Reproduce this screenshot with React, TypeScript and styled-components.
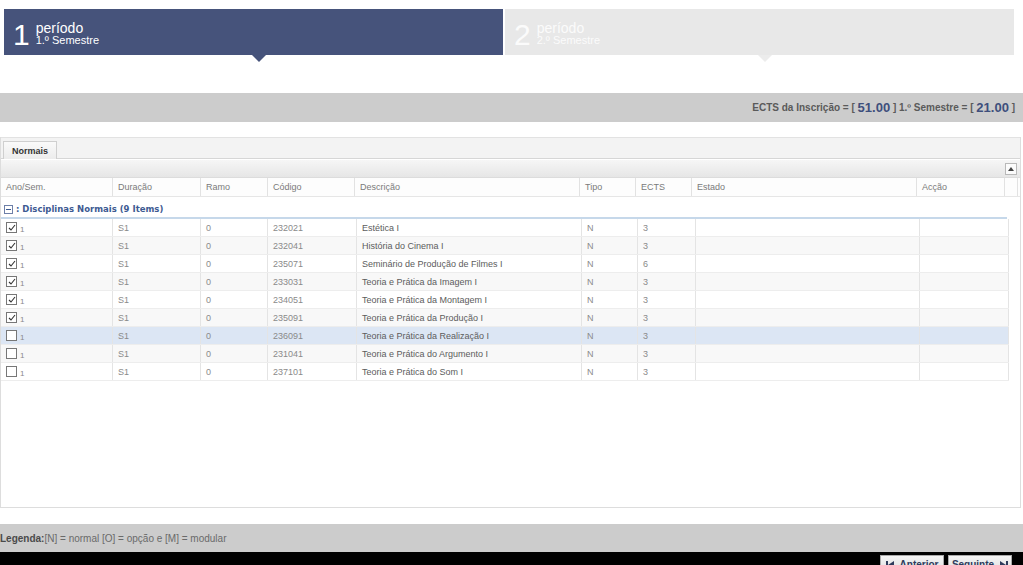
import React from 'react'
import styled, { createGlobalStyle } from 'styled-components'

const GlobalStyle = createGlobalStyle`
  html, body {
    margin: 0;
    padding: 0;
    background: #ffffff;
    font-family: "Liberation Sans", Arial, sans-serif;
  }
`

const Page = styled.div`
  width: 1023px;
  height: 565px;
  overflow: hidden;
  display: flex;
  flex-direction: column;
  & > * {
    flex-shrink: 0;
  }
`

const Steps = styled.div`
  display: flex;
  gap: 2px;
  padding: 9px 9px 0 4px;
  height: 46px;
`

const Step = styled.div<{ $active?: boolean }>`
  position: relative;
  box-sizing: border-box;
  flex: ${(p) => (p.$active ? '0 0 499px' : '1 1 auto')};
  background: ${(p) => (p.$active ? '#46537b' : '#e8e8e8')};
  color: ${(p) => (p.$active ? '#ffffff' : '#fbfbfb')};
  display: flex;
  align-items: center;
  padding-left: 9px;
  gap: 6px;

  &::after {
    content: '';
    position: absolute;
    left: calc(50% + 5px);
    bottom: -7px;
    margin-left: -7px;
    border-left: 7px solid transparent;
    border-right: 7px solid transparent;
    border-top: 7px solid ${(p) => (p.$active ? '#46537b' : '#ececec')};
  }
`

const StepNumber = styled.span`
  font-size: 30px;
  line-height: 1;
  margin-top: 6px;
`

const StepText = styled.div`
  display: flex;
  flex-direction: column;
  margin-top: 3px;
`

const StepTitle = styled.span`
  font-size: 14px;
  line-height: 14px;
`

const StepSub = styled.span`
  font-size: 11px;
  line-height: 11px;
`

const Summary = styled.div`
  margin-top: 38px;
  height: 29px;
  background: #cccccc;
  display: flex;
  align-items: center;
  justify-content: flex-end;
  padding-right: 8px;
  font-size: 10px;
  font-weight: bold;
  color: #5a5a5a;
  white-space: pre;
`

const Value = styled.span`
  font-size: 13px;
  font-weight: bold;
  color: #3e4f7c;
`

const Panel = styled.div`
  margin: 15px 2px 0 0;
  height: 371px;
  border: 1px solid #dddddd;
  border-top: none;
  display: flex;
  flex-direction: column;
  background: #ffffff;
  box-sizing: border-box;
`

const TabStrip = styled.div`
  height: 22px;
  background: #f3f3f3;
  border-top: 1px solid #e2e2e2;
  border-bottom: 1px solid #d6d6d6;
  display: flex;
  align-items: flex-end;
  padding-left: 2px;
  box-sizing: border-box;
`

const Tab = styled.div`
  height: 18px;
  padding: 0 8px;
  border: 1px solid #cfcfcf;
  border-bottom: none;
  background: linear-gradient(#fafafa, #ececec);
  font-size: 9px;
  font-weight: bold;
  color: #333;
  display: flex;
  align-items: center;
  box-sizing: border-box;
  margin-bottom: -1px;
`

const Toolbar = styled.div`
  margin-top: 1px;
  height: 17px;
  background: linear-gradient(#f6f6f6, #e6e6e6);
  border-bottom: 1px solid #dcdcdc;
  display: flex;
  justify-content: flex-end;
  align-items: center;
  padding-right: 3px;
`

const CollapseButton = styled.div`
  width: 10px;
  height: 10px;
  border: 1px solid #b9b9b9;
  background: #fbfbfb;
  display: flex;
  align-items: center;
  justify-content: center;
`

const cols = '112px 88px 67px 87px 225px 56px 56px 225px 88px 13px'

const HeaderRow = styled.div`
  display: grid;
  grid-template-columns: ${cols};
  height: 18px;
  border-bottom: 1px solid #e6e6e6;
  background: #fdfdfd;
`

const HeaderCell = styled.div`
  font-size: 9px;
  color: #7a7a7a;
  padding-left: 5px;
  display: flex;
  align-items: center;
  border-right: 1px solid #e2e2e2;
`

const GroupRow = styled.div`
  margin-top: 4px;
  height: 18px;
  width: 1006px;
  display: flex;
  align-items: center;
  gap: 3px;
  padding-left: 3px;
  border-bottom: 2px solid #c6d8ea;
  box-sizing: border-box;
  font-family: "DejaVu Sans", Verdana, sans-serif;
  font-size: 8.5px;
  font-weight: bold;
  color: #3d5a92;
`

const GroupToggle = styled.span`
  width: 7px;
  height: 7px;
  border: 1px solid #6d7fa8;
  display: inline-flex;
  align-items: center;
  justify-content: center;
  &::before {
    content: '';
    width: 5px;
    height: 1px;
    background: #3d5a92;
  }
`

const Row = styled.div<{ $alt?: boolean; $selected?: boolean }>`
  display: grid;
  grid-template-columns: 112px 88px 67px 89px 225px 56px 58px 224px 89px;
  width: 1008px;
  height: 18px;
  background: ${(p) => (p.$selected ? '#dce6f4' : p.$alt ? '#f8f8f8' : '#ffffff')};
  border-bottom: 1px solid #ededed;
  box-sizing: border-box;
`

const Cell = styled.div<{ $dark?: boolean }>`
  font-size: 9px;
  color: ${(p) => (p.$dark ? '#5c5c5c' : '#8a8a8a')};
  padding-left: 5px;
  display: flex;
  align-items: center;
  gap: 3px;
  border-right: 1px solid #e4e4e4;
  white-space: nowrap;
`

const Check = styled.span`
  width: 9px;
  height: 9px;
  border: 1px solid #777;
  background: #fff;
  display: inline-flex;
  align-items: center;
  justify-content: center;
`

const One = styled.span`
  font-size: 8px;
  margin-top: 3px;
`

const Legend = styled.div`
  margin-top: 16px;
  height: 28px;
  background: #cccccc;
  display: flex;
  align-items: center;
  font-size: 10px;
  color: #6a6a6a;
  b {
    color: #4a4a4a;
  }
`

const BottomBar = styled.div`
  flex: 1 1 auto;
  min-height: 0;
  background: #000000;
  display: flex;
  justify-content: flex-end;
  gap: 4px;
  padding: 3px 11px 0 0;
`

const NavButton = styled.div`
  height: 20px;
  width: 64px;
  background: linear-gradient(#f4f4f4, #dcdcdc);
  border: 1px solid #aaaaaa;
  font-size: 10px;
  font-weight: bold;
  color: #2e3b5c;
  display: flex;
  justify-content: center;
  align-items: flex-start;
  gap: 6px;
  padding-top: 3px;
  box-sizing: border-box;
  flex-shrink: 0;
`

const headers = ['Ano/Sem.', 'Duração', 'Ramo', 'Código', 'Descrição', 'Tipo', 'ECTS', 'Estado', 'Acção', '']

const rows = [
  { code: '232021', name: 'Estética I', ects: '3', checked: true },
  { code: '232041', name: 'História do Cinema I', ects: '3', checked: true },
  { code: '235071', name: 'Seminário de Produção de Filmes I', ects: '6', checked: true },
  { code: '233031', name: 'Teoria e Prática da Imagem I', ects: '3', checked: true },
  { code: '234051', name: 'Teoria e Prática da Montagem I', ects: '3', checked: true },
  { code: '235091', name: 'Teoria e Prática da Produção I', ects: '3', checked: true },
  { code: '236091', name: 'Teoria e Prática da Realização I', ects: '3', checked: false },
  { code: '231041', name: 'Teoria e Prática do Argumento I', ects: '3', checked: false },
  { code: '237101', name: 'Teoria e Prática do Som I', ects: '3', checked: false },
]

const Tick = () => (
  <svg width="8" height="8" viewBox="0 0 8 8">
    <path d="M1 4 L3 6 L7 1" fill="none" stroke="#333" strokeWidth="1.1" />
  </svg>
)

const SkipIcon = ({ dir }: { dir: 'left' | 'right' }) => (
  <svg width="8" height="8" viewBox="0 0 8 8" style={{ marginTop: 2 }}>
    {dir === 'left' ? (
      <>
        <rect x="0" y="0" width="2" height="8" fill="#2e3b5c" />
        <path d="M8 0 L2 4 L8 8 Z" fill="#2e3b5c" />
      </>
    ) : (
      <>
        <rect x="6" y="0" width="2" height="8" fill="#2e3b5c" />
        <path d="M0 0 L6 4 L0 8 Z" fill="#2e3b5c" />
      </>
    )}
  </svg>
)

export default function App() {
  return (
    <Page>
      <GlobalStyle />
      <Steps>
        <Step $active>
          <StepNumber>1</StepNumber>
          <StepText>
            <StepTitle>período</StepTitle>
            <StepSub>1.º Semestre</StepSub>
          </StepText>
        </Step>
        <Step>
          <StepNumber>2</StepNumber>
          <StepText>
            <StepTitle>período</StepTitle>
            <StepSub>2.º Semestre</StepSub>
          </StepText>
        </Step>
      </Steps>

      <Summary>
        ECTS da Inscrição = [ <Value>51.00</Value> ] 1.º Semestre = [ <Value>21.00</Value> ]
      </Summary>

      <Panel>
        <TabStrip>
          <Tab>Normais</Tab>
        </TabStrip>
        <Toolbar>
          <CollapseButton>
            <svg width="6" height="4" viewBox="0 0 6 4">
              <path d="M0 4 L3 0 L6 4 Z" fill="#444" />
            </svg>
          </CollapseButton>
        </Toolbar>
        <HeaderRow>
          {headers.map((h, i) => (
            <HeaderCell key={i}>{h}</HeaderCell>
          ))}
        </HeaderRow>
        <GroupRow>
          <GroupToggle />: Disciplinas Normais (9 Items)
        </GroupRow>
        {rows.map((r, i) => (
          <Row key={r.code} $alt={i % 2 === 1} $selected={i === 6}>
            <Cell>
              <Check>{r.checked && <Tick />}</Check>
              <One>1</One>
            </Cell>
            <Cell>S1</Cell>
            <Cell>0</Cell>
            <Cell>{r.code}</Cell>
            <Cell $dark>{r.name}</Cell>
            <Cell>N</Cell>
            <Cell>{r.ects}</Cell>
            <Cell />
            <Cell />
          </Row>
        ))}
      </Panel>

      <Legend>
        <b>Legenda:</b>[N] = normal [O] = opção e [M] = modular
      </Legend>

      <BottomBar>
        <NavButton>
          <SkipIcon dir="left" />
          Anterior
        </NavButton>
        <NavButton>
          Seguinte
          <SkipIcon dir="right" />
        </NavButton>
      </BottomBar>
    </Page>
  )
}
